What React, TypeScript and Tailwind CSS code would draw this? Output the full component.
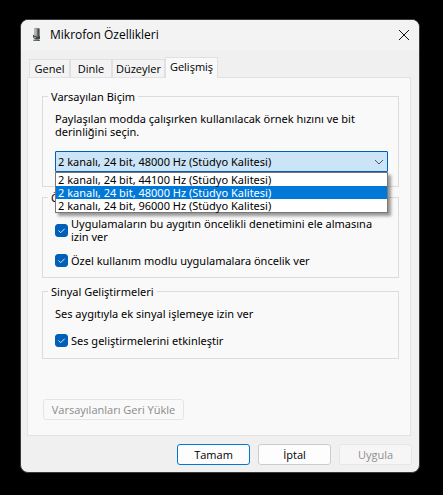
import { useState } from "react";
import type { ReactNode } from "react";

const TABS = [
  { id: "general", label: "Genel", width: "w-[41px]" },
  { id: "listen", label: "Dinle", width: "w-[42px]" },
  { id: "levels", label: "Düzeyler", width: "w-[53px]" },
  { id: "advanced", label: "Gelişmiş", width: "w-[53px]" },
];

const FORMATS = [
  "2 kanalı, 24 bit, 44100 Hz (Stüdyo Kalitesi)",
  "2 kanalı, 24 bit, 48000 Hz (Stüdyo Kalitesi)",
  "2 kanalı, 24 bit, 96000 Hz (Stüdyo Kalitesi)",
];

const MicrophoneIcon = () => (
  <svg className="h-4 w-4" viewBox="0 0 16 16" aria-hidden="true">
    <path d="M5 1.500 7 .8 10.500 1.500V10H6V9z" fill="#8c8c8c" />
    <path d="M5 1.500 7.500 1v7.500H5z" fill="#b4b4b4" />
    <path d="M8.500 1.500h2V10h-2z" fill="#4c4c4c" />
    <path d="M4 7.500 6 9l2.500 1 2.500-1v3l-2 .8 2 .7V14H5l-1-1 2.500-.8-2.500-1.400z" fill="#3c4646" />
    <path d="M4.500 10.200 7 10.800M5 12.900h4" stroke="#c4c4c4" strokeWidth="0.800" />
  </svg>
);

const Group = ({
  title,
  className,
  children,
}: {
  title: string;
  className: string;
  children: ReactNode;
}) => (
  <fieldset className={`border border-[#dcdcdc] pr-2.5 pl-[5px] ${className}`}>
    <legend className="px-[3px]">{title}</legend>
    <div className="pl-[7px]">{children}</div>
  </fieldset>
);

const CheckOption = ({
  label,
  defaultChecked,
}: {
  label: string;
  defaultChecked?: boolean;
}) => (
  <label className="flex items-center gap-[3px]">
    <span className="grid h-[13px] w-[13px] shrink-0">
      <input
        type="checkbox"
        defaultChecked={defaultChecked}
        className="peer col-start-1 row-start-1 h-[13px] w-[13px] appearance-none rounded-[3px] border border-[#868686] bg-white checked:border-[#005fb8] checked:bg-[#005fb8]"
      />
      <svg
        className="pointer-events-none invisible col-start-1 row-start-1 h-[13px] w-[13px] peer-checked:visible"
        viewBox="0 0 13 13"
        fill="none"
        stroke="#dcebf8"
        aria-hidden="true"
      >
        <path d="M3.500 6.500 5.700 8.700 9.700 4.700" />
      </svg>
    </span>
    <span>{label}</span>
  </label>
);

const App = () => {
  const [activeTab, setActiveTab] = useState("advanced");
  const [format, setFormat] = useState(FORMATS[1]);

  return (
    <div className="min-h-screen bg-black pt-[19px] pr-[23px] pb-5 pl-5 font-['Noto_Sans',sans-serif] text-[11px] leading-[13px] text-black">
      <main className="overflow-hidden rounded-lg border border-[#3a3a3a] bg-[#f0f0f0]">
        {/* Title bar */}
        <header className="flex h-[30px] items-center bg-[#f3f3f3] pr-[7px] pl-2">
          <MicrophoneIcon />
          <h1 className="ml-[5px] flex-1 font-['Open_Sans',sans-serif] text-xs leading-4">
            Mikrofon Özellikleri
          </h1>
          <button type="button" aria-label="Kapat" className="grid h-4 w-4 place-items-center">
            <svg className="h-3 w-3" viewBox="0 0 12 12" stroke="#111" aria-hidden="true">
              <path d="M1 1 11 11M11 1 1 11" />
            </svg>
          </button>
        </header>

        <div className="py-[7px] pr-[7px] pl-1.5">
          {/* Tabs */}
          <div role="tablist" className="flex items-end pl-0.5 font-['Open_Sans',sans-serif]">
            {TABS.map((tab) => (
              <button
                key={tab.id}
                type="button"
                role="tab"
                aria-selected={tab.id === activeTab}
                onClick={() => setActiveTab(tab.id)}
                className={`${tab.width} border border-b-0 border-[#e0e0e0] whitespace-nowrap ${
                  tab.id === activeTab ? "-mb-px h-[21px] bg-[#f9f9f9] pb-1" : "h-[18px] bg-[#f3f3f3]"
                }`}
              >
                {tab.label}
              </button>
            ))}
          </div>

          <div
            role="tabpanel"
            className="mr-px border border-[#e2e2e2] bg-[#f9f9f9] pt-3 pr-[11px] pb-[15px] pl-3.5"
          >
            <Group title="Varsayılan Biçim" className="pb-3.5">
              <p className="pt-[9px]">
                Paylaşılan modda çalışırken kullanılacak örnek hızını ve bit derinliğini seçin.
              </p>
              <div className="relative mt-[13px]">
                <select
                  aria-label="Varsayılan Biçim"
                  value={format}
                  onChange={(e) => setFormat(e.target.value)}
                  className="block h-[21px] w-full appearance-none rounded-[1px] border border-[#005fb8] bg-[#cce4f7] pl-0.5"
                >
                  {FORMATS.map((item) => (
                    <option key={item}>{item}</option>
                  ))}
                </select>
                <svg
                  className="pointer-events-none absolute top-[7px] right-1 h-2 w-2.5"
                  viewBox="0 0 10 8"
                  fill="none"
                  stroke="#555"
                  aria-hidden="true"
                >
                  <path d="M1 2 5 6 9 2" />
                </svg>
                <ul
                  role="listbox"
                  aria-label="Biçimler"
                  className="absolute top-full left-0 z-10 w-full border border-[#777] bg-white shadow-[3px_3px_3px_rgba(0,0,0,0.4)]"
                >
                  {FORMATS.map((item) => (
                    <li
                      key={item}
                      role="option"
                      aria-selected={item === format}
                      onClick={() => setFormat(item)}
                      className={`h-[13px] pl-0.5 ${item === format ? "bg-[#0078d7] text-white" : ""}`}
                    >
                      {item}
                    </li>
                  ))}
                </ul>
              </div>
            </Group>

            <Group title="Özel Kullanım Modu" className="mt-1 pb-2.5">
              <div className="flex flex-col gap-[11px] pt-[13px]">
                <CheckOption
                  label="Uygulamaların bu aygıtın öncelikli denetimini ele almasına izin ver"
                  defaultChecked
                />
                <CheckOption label="Özel kullanım modlu uygulamalara öncelik ver" defaultChecked />
              </div>
            </Group>

            <Group title="Sinyal Geliştirmeleri" className="mt-[7px] pb-[11px]">
              <p className="pt-[9px] pb-3.5">Ses aygıtıyla ek sinyal işlemeye izin ver</p>
              <CheckOption label="Ses geliştirmelerini etkinleştir" defaultChecked />
            </Group>

            <button
              type="button"
              disabled
              className="mt-10 ml-px block h-[21px] w-[141px] rounded-[3px] border border-[#e5e5e5] bg-[#f9f9f9] font-['Open_Sans',sans-serif] text-[#8a8a8a]"
            >
              Varsayılanları Geri Yükle
            </button>
          </div>

          {/* Dialog actions */}
          <footer className="mt-2 flex justify-end gap-2 font-['Open_Sans',sans-serif]">
            <button
              type="button"
              className="h-[21px] w-[73px] rounded-[3px] border border-[#0078d4] bg-[#fdfdfd]"
            >
              Tamam
            </button>
            <button
              type="button"
              className="h-[21px] w-[73px] rounded-[3px] border border-[#cccccc] bg-[#fdfdfd]"
            >
              İptal
            </button>
            <button
              type="button"
              disabled
              className="h-[21px] w-[73px] rounded-[3px] border border-[#e6e6e6] bg-[#f6f6f6] text-[#8f8f8f]"
            >
              Uygula
            </button>
          </footer>
        </div>
      </main>
    </div>
  );
};

export default App;
